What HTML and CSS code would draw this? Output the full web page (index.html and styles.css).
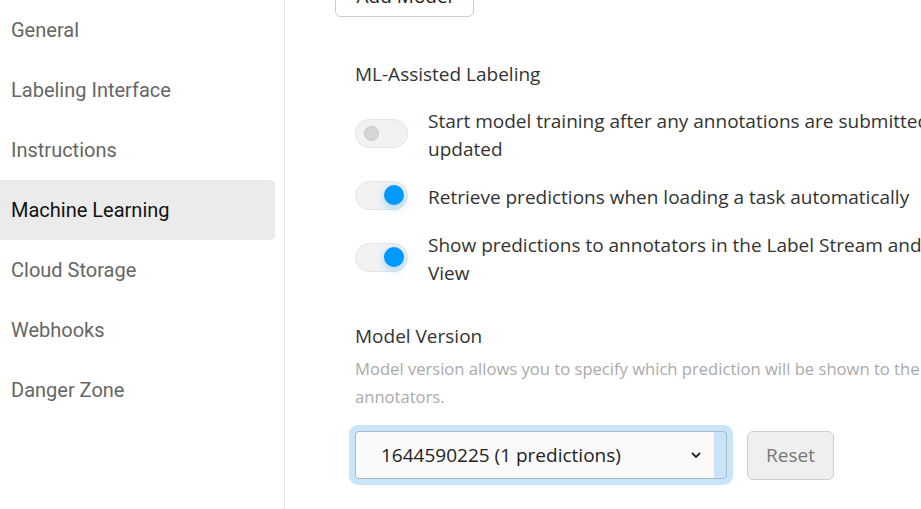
FILE: index.html
```html
<!DOCTYPE html>
<html>
<head>
<meta charset="utf-8">
<link rel="stylesheet" href="styles.css">
</head>
<body>
<div class="page">
  <nav class="sidebar">
    <div class="nav-item">General</div>
    <div class="nav-item">Labeling Interface</div>
    <div class="nav-item">Instructions</div>
    <div class="nav-item active">Machine Learning</div>
    <div class="nav-item">Cloud Storage</div>
    <div class="nav-item">Webhooks</div>
    <div class="nav-item">Danger Zone</div>
  </nav>
  <main class="main">
    <button class="btn add-btn">Add Model</button>

    <section class="section ml">
      <h3 class="section-title">ML-Assisted Labeling</h3>
      <div class="toggle-row">
        <span class="toggle disabled"><span class="knob"></span></span>
        <span class="toggle-label">Start model training after any annotations are submitted or updated</span>
      </div>
      <div class="toggle-row">
        <span class="toggle on"><span class="knob"></span></span>
        <span class="toggle-label">Retrieve predictions when loading a task automatically</span>
      </div>
      <div class="toggle-row">
        <span class="toggle on"><span class="knob"></span></span>
        <span class="toggle-label">Show predictions to annotators in the Label Stream and Quick View</span>
      </div>
    </section>

    <section class="section mv">
      <h3 class="section-title">Model Version</h3>
      <p class="desc">Model version allows you to specify which prediction will be shown to the annotators.</p>
      <div class="select-row">
        <div class="select-wrap">
          <div class="select">
            <span class="select-value">1644590225 (1 predictions)</span>
            <svg class="chev" width="12" height="8" viewBox="0 0 12 8"><path d="M2 2 L6 6 L10 2" fill="none" stroke="#222" stroke-width="1.8"/></svg>
          </div>
        </div>
        <button class="btn reset-btn">Reset</button>
      </div>
    </section>
  </main>
</div>
</body>
</html>
```

FILE: styles.css
```css
html, body {
  margin: 0;
  padding: 0;
  background: #fff;
  overflow: hidden;
}
.page {
  display: flex;
  width: 1200px;
  height: 509px;
}
.sidebar {
  width: 284px;
  flex: none;
  border-right: 1px solid #e6e6e6;
  display: flex;
  flex-direction: column;
  font-family: Roboto, "Liberation Sans", sans-serif;
  font-size: 20px;
}
.nav-item {
  width: 275px;
  height: 60px;
  box-sizing: border-box;
  padding-left: 11px;
  display: flex;
  align-items: center;
  color: #666;
  border-radius: 0 5px 5px 0;
}
.nav-item.active {
  background: #ebebeb;
  color: #111;
}
.main {
  flex: none;
  width: 800px;
  padding-left: 50px;
  font-family: "Open Sans", "Noto Sans", sans-serif;
  color: #333;
  font-size: 19px;
}
.btn {
  font-family: "Open Sans", "Noto Sans", sans-serif;
  font-size: 19px;
  border-radius: 6px;
  box-sizing: border-box;
}
.add-btn {
  display: block;
  width: 139px;
  height: 42px;
  margin-top: -25px;
  background: #fff;
  border: 1px solid #ccc;
  color: #222;
}
.section {
  padding-left: 20px;
}
.section-title {
  margin: 0;
  font-weight: 400;
  font-size: 19px;
  line-height: 28px;
}
.ml {
  margin-top: 43px;
}
.ml .section-title {
  margin-bottom: 19px;
}
.toggle-row {
  display: flex;
  align-items: center;
  gap: 20px;
  margin-bottom: 20px;
}
.toggle-label {
  flex: none;
  line-height: 28px;
  width: 568px;
}
.toggle {
  position: relative;
  flex: none;
  width: 53px;
  height: 29px;
  box-sizing: border-box;
  border-radius: 15px;
  background: #f2f2f2;
  border: 1px solid #e4e4e4;
  margin-top: -3px;
}
.toggle .knob {
  position: absolute;
  border-radius: 50%;
}
.toggle.disabled .knob {
  width: 13px;
  height: 13px;
  left: 8px;
  top: 6px;
  background: #d6d6d6;
  border: 1px solid #c8c8c8;
}
.toggle.on .knob {
  width: 20px;
  height: 20px;
  left: 28px;
  top: 3px;
  background: #0099ff;
  box-shadow: 0 3px 8px rgba(0, 153, 255, 0.35);
}
.mv {
  margin-top: 35px;
}
.desc {
  margin: 5px 0 14px;
  font-size: 16.6px;
  line-height: 28px;
  color: #aaa;
  width: 610px;
}
.select-row {
  display: flex;
  align-items: center;
  gap: 14px;
}
.select-wrap {
  padding: 6px;
  margin-left: -6px;
  background: #c8e5fa;
  border-radius: 9px;
}
.select {
  width: 372px;
  height: 48px;
  box-sizing: border-box;
  border: 1px solid #a9b9c6;
  border-radius: 4px;
  background: linear-gradient(to right, #fafafa 0, #fafafa 358px, #c9e4f8 358px);
  display: flex;
  align-items: center;
  padding-left: 25px;
  padding-right: 24px;
  color: #222;
}
.select-value {
  flex: 1;
}
.reset-btn {
  width: 87px;
  height: 49px;
  background: #efefef;
  border: 1px solid #cfcfcf;
  color: #777;
}
```
